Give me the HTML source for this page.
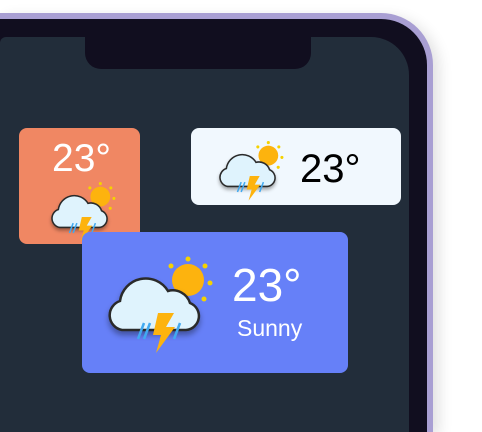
<!DOCTYPE html>
<html><head><style>
html,body{margin:0;padding:0;overflow:hidden;width:482px;height:432px}
body{background:#fff;font-family:"Liberation Sans",sans-serif}
.wrap{position:relative;width:482px;height:432px;overflow:hidden}
.outer{position:absolute;left:0;top:13px;width:433px;height:419px;background:#a99fd3;border-radius:0 52px 0 0;box-shadow:6px 4px 14px rgba(0,0,0,.12)}
.frame{position:absolute;left:0;top:19px;width:427px;height:413px;background:#110e1f;border-radius:0 46px 0 0}
.screen{position:absolute;left:0;top:37px;width:409px;height:395px;background:#222d3a;border-radius:6px 38px 0 0}
.notch{position:absolute;left:85px;top:37px;width:226px;height:32px;background:#110e1f;border-radius:0 0 16px 16px}
.card{position:absolute;border-radius:8px}
.t{position:absolute;line-height:1}
svg{position:absolute}
</style></head><body><div class="wrap">
<div class="outer"></div><div class="frame"></div><div class="screen"></div><div class="notch"></div>
<svg width="0" height="0" style="position:absolute"><defs>
<filter id="sh" x="-30%" y="-30%" width="160%" height="170%"><feDropShadow dx="0" dy="4" stdDeviation="3" flood-color="#000" flood-opacity="0.35"/></filter>
<symbol id="ic" viewBox="0 0 115 100">
<g fill="#f5d200"><circle cx="88" cy="4" r="2.5"/><circle cx="105" cy="11" r="2.5"/><circle cx="110" cy="28" r="2.5"/><circle cx="104" cy="44" r="2.5"/><circle cx="71" cy="11" r="2.5"/></g>
<circle cx="88" cy="25" r="16" fill="#fdb30e"/>
<path filter="url(#sh)" d="M22 75 H86 A14 14 0 0 0 90 48 A18 18 0 0 0 68 36 A26 26 0 0 0 20 46 A15 15 0 0 0 22 75 Z" fill="#dff3fd" stroke="#2a2a2a" stroke-width="2.5"/>
<path d="M58 58 L74 58 L66 72 L75 72 L56 98 L61 80 L53 80 Z" fill="#fdb30e"/>
<path d="M44 68 L38 84 M50 68 L44 84 M80 68 L74 84" stroke="#41a9f0" stroke-width="2.5"/>
</symbol></defs></svg>
<div class="card" style="left:19px;top:128px;width:121px;height:116px;background:#f08763"></div>
<div class="t" style="left:52px;top:139px;font-size:39px;color:#fff">23°</div>
<svg style="left:46px;top:181px" width="71" height="62"><use href="#ic"/></svg>
<div class="card" style="left:191px;top:128px;width:210px;height:77px;background:#f1f8fe"></div>
<svg style="left:214px;top:140px" width="71" height="62"><use href="#ic"/></svg>
<div class="t" style="left:300px;top:149px;font-size:40px;color:#000">23°</div>
<div class="card" style="left:82px;top:232px;width:266px;height:141px;background:#6680f8"></div>
<svg style="left:100px;top:255px" width="115" height="100"><use href="#ic"/></svg>
<div class="t" style="left:232px;top:262px;font-size:46px;color:#fff">23°</div>
<div class="t" style="left:237px;top:317px;font-size:23px;color:#fff">Sunny</div>
</div></body></html>
